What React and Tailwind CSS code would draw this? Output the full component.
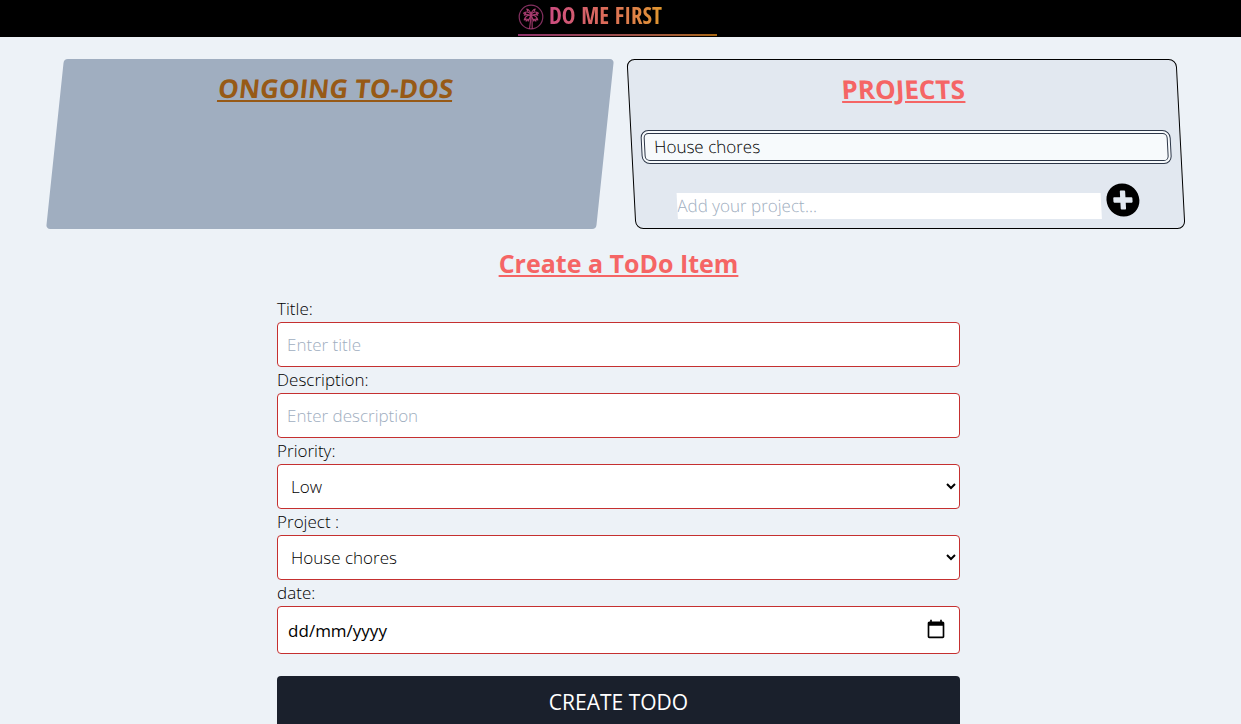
import { useRef, useState } from "react";
import { FaPlusCircle } from "react-icons/fa";
import { MdCalendarToday } from "react-icons/md";

function PalmLogo() {
  return (
    <svg viewBox="0 0 26 26" className="h-[26px] w-[26px] shrink-0" fill="none" stroke="#a83c70" aria-hidden="true">
      <circle cx="13" cy="13" r="11.8" stroke="#843060" strokeWidth="1.2" />
      <g strokeWidth="1.1" strokeLinecap="round" strokeLinejoin="round">
        <path d="M12.300 12C12.600 16 12.400 20 11.600 24.500M13.700 12c.4 4 .5 8.500.5 12.500" />
        <path d="M13 10.500C10.800 7.500 8 7.300 5.500 9.300l2.300.1-1.600 1.700 3-.6 3.800 1" />
        <path d="M13 10.500C15.200 7.500 18 7.300 20.500 9.300l-2.300.1 1.600 1.700-3-.6-3.800 1" />
        <path d="M13 11C9.500 11 7 12.800 6.200 16l1.900-1.200v2.300l1.900-2 .2 2 2.800-5.600" />
        <path d="M13 11c3.500 0 6 1.800 6.800 5l-1.900-1.200v2.300l-1.900-2-.2 2-2.800-5.600" />
        <path d="M13 10.500C12.500 8 11 5.800 8.800 5l1 2.200M13 10.500C13.500 8 15 5.800 17.200 5l-1 2.200" />
      </g>
    </svg>
  );
}

function Header() {
  return (
    <header className="flex h-[37px] justify-center bg-black pr-1.5">
      <a href="#" className="flex h-9 w-[199px] flex-col justify-between">
        <span className="flex items-start gap-[5px]">
          <span className="pt-1">
            <PalmLogo />
          </span>
          <span className="bg-linear-to-r from-[#cc4c80] via-[#dc6c58] to-[#e0962c] bg-clip-text font-['Open_Sans_Condensed','Roboto_Condensed',sans-serif] text-[23px] leading-[30px] whitespace-nowrap text-transparent">
            DO ME FIRST
          </span>
        </span>
        <span className="h-0.5 bg-linear-to-r from-[#8e2f68] to-[#a8660f]" />
      </a>
    </header>
  );
}

const control = "block h-[45px] w-full rounded border border-[#c53030] bg-white px-[9px] placeholder:text-[#a0aec0]";

function Field({ id, label, children }) {
  return (
    <div>
      <label htmlFor={id} className="block">{label}</label>
      {children}
    </div>
  );
}

function DateInput({ id }) {
  const [value, setValue] = useState("");
  const input = useRef(null);
  return (
    <div className="relative">
      <input
        ref={input}
        id={id}
        type="text"
        inputMode="numeric"
        placeholder="dd/mm/yyyy"
        value={value}
        onChange={(e) => setValue(e.target.value)}
        className="block h-12 w-full rounded border border-[#c53030] bg-white px-[10px] font-normal placeholder:text-black"
      />
      <button
        type="button"
        aria-label="Choose date"
        onClick={() => input.current.focus()}
        className="absolute inset-y-0 right-[14px] flex items-center pb-0.5"
      >
        <MdCalendarToday className="h-5 w-5" />
      </button>
    </div>
  );
}

export default function App() {
  return (
    <div className="min-h-screen bg-[#edf2f7] font-['Open_Sans','Noto_Sans',sans-serif] text-[17px] leading-[26px] font-light text-black">
      <Header />
      <main className="pt-[22px] pr-1">
        <div className="grid grid-cols-2 gap-[26px] pr-14 pl-[55px]">
          <section className="min-h-[170px] -skew-x-6 rounded bg-[#a0aec0] pt-[11px] text-center">
            <h2 className="text-[26px] leading-9 font-bold text-[#975a16] underline">ONGOING TO-DOS</h2>
          </section>
          <section className="min-h-[170px] skew-x-3 rounded-lg border border-black bg-[#e2e8f0] px-[9px] pt-[11px]">
            <h2 className="text-center text-[26px] leading-9 font-bold text-[#f56565] underline">PROJECTS</h2>
            <ul className="mt-[23px]">
              <li className="rounded-lg border-4 border-double border-[#2d3748] bg-[#f7fafc] px-[9px]">House chores</li>
            </ul>
            <form className="mt-[17px] flex items-center gap-[5px] pr-[34px] pl-[33px]" onSubmit={(e) => e.preventDefault()}>
              <input
                type="text"
                aria-label="Add your project"
                placeholder="Add your project..."
                className="mt-3 h-[26px] min-w-0 flex-1 bg-white placeholder:text-[#a0aec0]"
              />
              <button type="submit" aria-label="Add project">
                <FaPlusCircle className="h-[34px] w-[34px]" />
              </button>
            </form>
          </section>
        </div>

        <form className="mx-auto w-[55.2%] pt-4" onSubmit={(e) => e.preventDefault()}>
          <h2 className="text-center text-[25px] leading-9 font-bold text-[#f56565] underline">Create a ToDo Item</h2>
          <div className="mt-[15px]">
            <Field id="title" label="Title:">
              <input id="title" type="text" placeholder="Enter title" className={control} />
            </Field>
            <Field id="description" label="Description:">
              <input id="description" type="text" placeholder="Enter description" className={control} />
            </Field>
            <Field id="priority" label="Priority:">
              <select id="priority" className={control}>
                <option>Low</option>
                <option>Medium</option>
                <option>High</option>
              </select>
            </Field>
            <Field id="project" label="Project :">
              <select id="project" className={control}>
                <option>House chores</option>
              </select>
            </Field>
            <Field id="date" label="date:">
              <DateInput id="date" />
            </Field>
          </div>
          <button type="submit" className="mt-[22px] block h-[52px] w-full rounded bg-[#1a202c] text-[21px] font-normal text-white">
            CREATE TODO
          </button>
        </form>
      </main>
    </div>
  );
}
